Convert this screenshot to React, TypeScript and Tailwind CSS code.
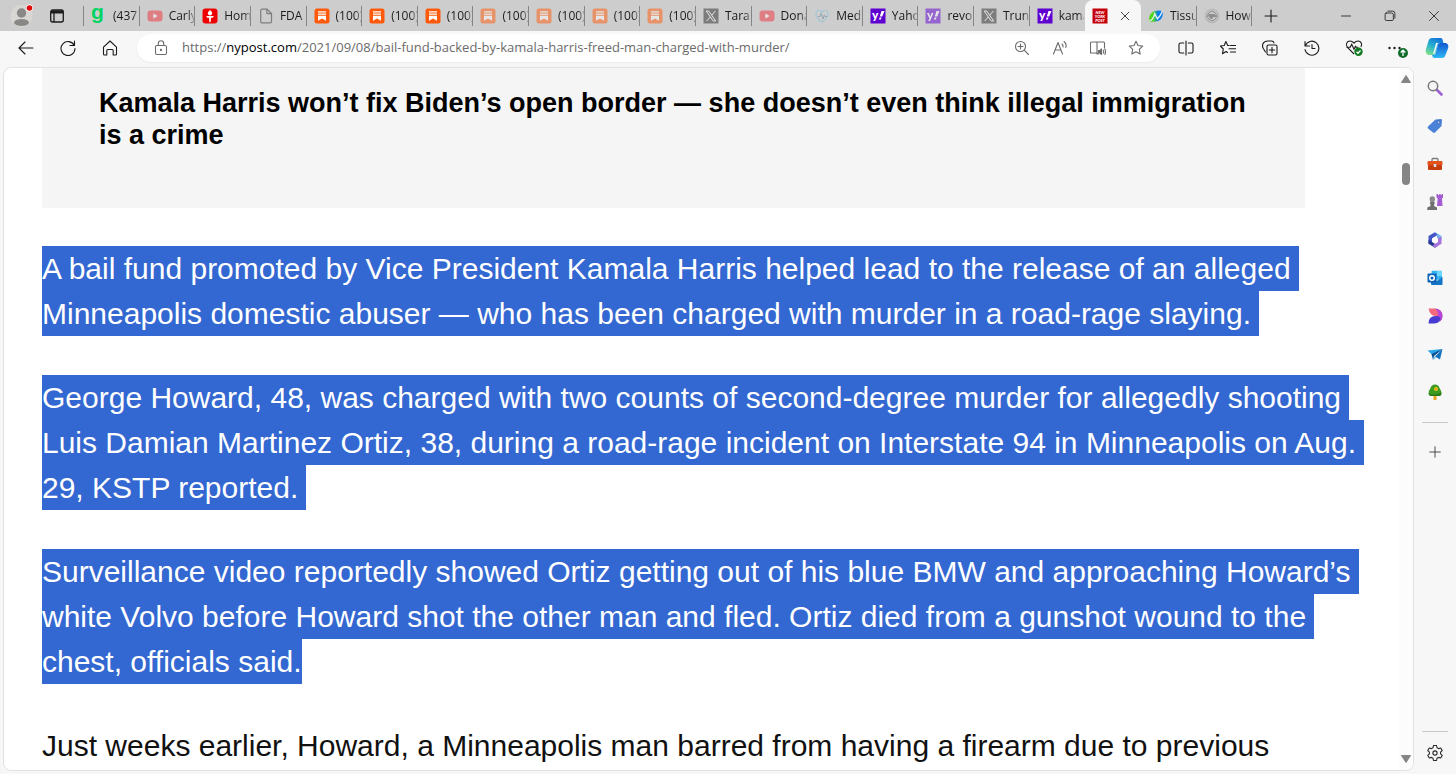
import React from 'react';
import clsx from 'clsx';

type TabIcon = 'g' | 'youtube' | 'torch' | 'page' | 'substack' | 'x' | 'heart' | 'yahoo' | 'post' | 'swirl' | 'seal';

interface Tab {
  title: string;
  icon: TabIcon;
  faded?: boolean;
  active?: boolean;
}

const tabs: Tab[] = [
  { title: '(437', icon: 'g' },
  { title: 'Carly', icon: 'youtube', faded: true },
  { title: 'Hom', icon: 'torch' },
  { title: 'FDA', icon: 'page' },
  { title: '(100)', icon: 'substack' },
  { title: '(100)', icon: 'substack' },
  { title: '(100)', icon: 'substack' },
  { title: '(100)', icon: 'substack', faded: true },
  { title: '(100)', icon: 'substack', faded: true },
  { title: '(100)', icon: 'substack', faded: true },
  { title: '(100)', icon: 'substack', faded: true },
  { title: 'TaraE', icon: 'x', faded: true },
  { title: 'Dona', icon: 'youtube', faded: true },
  { title: 'Med', icon: 'heart', faded: true },
  { title: 'Yaho', icon: 'yahoo' },
  { title: 'revo', icon: 'yahoo', faded: true },
  { title: 'Trun', icon: 'x', faded: true },
  { title: 'kama', icon: 'yahoo' },
  { title: 'Bail fund backed by Kamala Harris', icon: 'post', active: true },
  { title: 'Tissu', icon: 'swirl' },
  { title: 'How', icon: 'seal', faded: true },
];

const Favicon = ({ icon }: { icon: TabIcon }) => {
  switch (icon) {
    case 'g':
      return (
        <svg className="w-4 h-4" viewBox="0 0 16 16">
          <text x="0" y="11" fontSize="21" fontWeight="bold" fontFamily="Liberation Sans, sans-serif" fill="#00d563">g</text>
        </svg>
      );
    case 'youtube':
      return (
        <svg className="w-4 h-4" viewBox="0 0 16 16">
          <rect x="0.5" y="2.5" width="15" height="11" rx="3" fill="#f0323a" />
          <path d="M6.3 5.5v5L10.7 8z" fill="#fff" />
        </svg>
      );
    case 'torch':
      return (
        <svg className="w-4 h-4" viewBox="0 0 16 16">
          <rect x="0.5" y="0.5" width="15" height="15" rx="3" fill="#ee0000" />
          <path d="M8 1.8c.3 1.2 2.200 1.700 2.200 3.500C10.200 6.600 9 7.400 8 7.400s-2.200-.8-2.200-2.100C5.800 3.800 7.600 3.300 8 1.800z" fill="#fff" />
          <path d="M4.200 8h7.600l-1 1.800H9l-.4 4.400H7.400L7 9.800H5.200z" fill="#fff" />
        </svg>
      );
    case 'page':
      return (
        <svg className="w-4 h-4" viewBox="0 0 16 16" fill="none" stroke="#7d7d7d" strokeWidth="1.2">
          <path d="M4 1.2h5L13.5 5.5v8a1.300 1.300 0 0 1-1.300 1.300H4a1.300 1.300 0 0 1-1.300-1.300v-11A1.300 1.300 0 0 1 4 1.200z" />
          <path d="M8.8 1.4v3.300c0 .7.4 1 1 1h3.400" />
        </svg>
      );
    case 'substack':
      return (
        <svg className="w-4 h-4" viewBox="0 0 16 16">
          <rect x="0.5" y="0.5" width="15" height="15" rx="2.5" fill="#ff5a0a" />
          <path d="M4 3.2h8v1.300H4zM4 5.500h8v1.300H4zM4 7.800h8v5L8 10.600 4 12.800z" fill="#fff" />
        </svg>
      );
    case 'x':
      return (
        <svg className="w-4 h-4" viewBox="0 0 16 16">
          <rect x="0.5" y="0.5" width="15" height="15" fill="#2e2e2e" />
          <path d="M3.200 3h2.500l7 10h-2.500zM12.300 3 8.800 7.200M7.200 9 3.700 13" fill="none" stroke="#fff" />
        </svg>
      );
    case 'heart':
      return (
        <svg className="w-4 h-4" viewBox="0 0 16 16" fill="none">
          <path d="M8 14C4 11.500 2 9 2 6.200 2 3.800 3.500 2.500 5 2.500c1.500 0 2.500.8 3 2 .5-1.200 1.500-2 3-2 1.600 0 3 1.300 3 3.500C14 9 12 11.500 8 14z" stroke="#79bede" strokeWidth="1.2" />
          <path d="M4 8.500h2l1-3 2 5.500 1.200-4 .8 1.500h2" stroke="#5d7f92" />
        </svg>
      );
    case 'yahoo':
      return (
        <svg className="w-4 h-4" viewBox="0 0 16 16">
          <rect x="0.5" y="0.5" width="15" height="15" fill="#5f01d1" />
          <text x="2" y="11" fontSize="12" fontWeight="900" fontFamily="Lato, sans-serif" fill="#fff">y</text>
          <path d="M11.500 3H14.500l-2.300 5.500H9.800zM9.500 9.500h2l-.6 2H9z" fill="#fff" />
        </svg>
      );
    case 'post':
      return (
        <svg className="w-4 h-4" viewBox="0 0 16 16">
          <rect x="0.5" y="0.5" width="15" height="15" fill="#c6000b" />
          <g fontSize="4" fontWeight="900" fontStyle="italic" fontFamily="Lato, sans-serif" fill="#fff" textAnchor="middle">
            <text x="8" y="5.500">NEW</text>
            <text x="8" y="9.500">YORK</text>
            <text x="8" y="13.500">POST</text>
          </g>
        </svg>
      );
    case 'swirl':
      return (
        <svg className="w-4 h-4" viewBox="0 0 16 16">
          <defs>
            <linearGradient id="swirl" x1="0" y1="0" x2="1" y2="0">
              <stop offset="0.3" stopColor="#4fd818" />
              <stop offset="0.65" stopColor="#0b7cf0" />
            </linearGradient>
          </defs>
          <path d="M1.200 10.500C1.200 6 5.500 2.500 10 2.500L14.500 3c1.300 5-1.500 10.500-7 10.500-2 0-4 .3-6 .7z" fill="url(#swirl)" />
          <path d="M1.500 13.500C4.500 11.500 6 9 6.700 5.800l2.800 5C11.500 9 13 6.500 14.500 3" fill="none" stroke="#e4ecf4" strokeWidth="1.400" />
        </svg>
      );
    case 'seal':
      return (
        <svg className="w-4 h-4" viewBox="0 0 16 16" fill="none" stroke="#4e4e4e">
          <circle cx="8" cy="8" r="7" fill="#8f8f8f" stroke="none" opacity="0.4" />
          <circle cx="8" cy="8" r="6.800" strokeDasharray="1 1" strokeWidth="0.600" />
          <circle cx="8" cy="8" r="4.500" fill="#c9c9c9" />
          <path d="M4.500 6.500h6l1.500 2H9L7.500 11 5.500 9z" fill="#4e4e4e" />
        </svg>
      );
  }
};

const IconButton = ({ label, className, children }: { label: string; className: string; children: React.ReactNode }) => (
  <button aria-label={label} title={label} className={clsx('flex shrink-0 items-center justify-center', className)}>
    {children}
  </button>
);

// Thin outline icon on a 16px grid
const Outline = ({ d, className = 'w-4 h-4', children }: { d: string; className?: string; children?: React.ReactNode }) => (
  <svg className={className} viewBox="0 0 16 16" fill="none" stroke="currentColor" strokeWidth="1.1" strokeLinecap="round" strokeLinejoin="round">
    <path d={d} />
    {children}
  </svg>
);

const TabStrip = () => (
  <header className="flex h-[31px] shrink-0 bg-[#cdcdcd] text-[#1b1b1b]">
    <div className="flex w-[84px] shrink-0 items-center">
      <button aria-label="Profile" className="ml-[10px]">
        <svg className="w-6 h-6" viewBox="0 0 24 24">
          <circle cx="11.500" cy="12" r="11" fill="#d9d7d3" />
          <circle cx="11.500" cy="9" r="4.700" fill="#8a8886" />
          <ellipse cx="11.500" cy="18.500" rx="7.500" ry="3.500" fill="#8a8886" />
          <circle cx="19.500" cy="4" r="3.500" fill="#fff" />
          <circle cx="19.500" cy="4" r="2.800" fill="#e00b0b" />
        </svg>
      </button>
      <button aria-label="Tab actions menu" className="ml-[15px]">
        <svg className="w-4 h-4" viewBox="0 0 16 16" fill="none" stroke="#1b1b1b" strokeWidth="1.300">
          <rect x="1.700" y="2" width="12.600" height="12" rx="2" />
          <path d="M2 4h12" strokeWidth="3" />
          <path d="M5 5v9" />
        </svg>
      </button>
      <span className="ml-auto h-5 w-px bg-[#858585]" />
    </div>
    <nav aria-label="Tabs" className="flex min-w-0 flex-1">
      {tabs.map((tab, i) => {
        if (tab.active) {
          return (
            <div key={i} className="flex min-w-0 flex-1 items-center rounded-t-lg bg-[#f7f7f7] pl-[7px]">
              <button aria-label={tab.title}>
                <Favicon icon={tab.icon} />
              </button>
              <IconButton label="Close tab" className="mx-auto w-5">
                <Outline className="w-3 h-3" d="M3 3l10 10M13 3L3 13" />
              </IconButton>
            </div>
          );
        }
        const hasDivider = !tabs[i + 1]?.active;
        return (
          <button key={i} className="flex min-w-0 flex-1 items-center pl-[7px]">
            <span className={clsx('shrink-0', tab.faded && 'opacity-50')}>
              <Favicon icon={tab.icon} />
            </span>
            <span className="ml-[6px] min-w-0 flex-1 overflow-hidden text-left font-['Open_Sans',sans-serif] text-xs whitespace-nowrap mask-r-from-75% mask-r-to-110%">
              {tab.title}
            </span>
            <span className={clsx('h-5 w-px shrink-0', hasDivider && 'bg-[#858585]')} />
          </button>
        );
      })}
    </nav>
    <IconButton label="New tab" className="w-[38px]">
      <Outline className="w-4 h-4" d="M8 2v12M2 8h12" />
    </IconButton>
    <div className="ml-[34px] flex">
      <IconButton label="Minimize" className="w-11">
        <Outline className="w-3 h-3" d="M2 8h12" />
      </IconButton>
      <IconButton label="Restore" className="w-11">
        <Outline className="w-3 h-3" d="M3 4h7a2.500 2.500 0 0 1 2.500 2.500v6A1.500 1.500 0 0 1 11 14H3a1.500 1.500 0 0 1-1.500-1.500v-7A1.500 1.500 0 0 1 3 4zM5 1.500h6.500a3 3 0 0 1 3 3V11" />
      </IconButton>
      <IconButton label="Close" className="w-11">
        <Outline className="w-3 h-3" d="M2 2l12 12M14 2L2 14" />
      </IconButton>
    </div>
  </header>
);

const STAR = 'M8 1.200l2 4.300 4.700.6-3.400 3.300.9 4.700L8 11.800l-4.200 2.300.9-4.700L1.300 6.100 6 5.500z';

const Toolbar = () => (
  <div className="flex h-9 shrink-0 items-center pb-[2px] pl-[5px] text-[#1b1b1b]">
    <IconButton label="Back" className="w-[42px]">
      <Outline d="M15 8H1M7 2L1 8l6 6" />
    </IconButton>
    <IconButton label="Refresh" className="w-[42px]">
      <Outline d="M14.500 1v4.500H10M14.300 5.500A7 7 0 1 0 15 8.500" />
    </IconButton>
    <IconButton label="Home" className="w-[42px]">
      <Outline d="M1.500 7.200L8 1l6.500 6.200v6.800a1 1 0 0 1-1 1h-2.300V10.500a1 1 0 0 0-1-1H5.800a1 1 0 0 0-1 1V15H2.500a1 1 0 0 1-1-1z" />
    </IconButton>
    <div className="ml-[6px] flex h-7 min-w-0 flex-1 items-center rounded-full bg-white pr-[5px] pl-[14px] text-[#6b6b6b] shadow-xs">
      <IconButton label="Site information" className="w-5">
        <Outline d="M4 5.500h8A1.500 1.500 0 0 1 13.500 7v6a1.500 1.500 0 0 1-1.500 1.500H4A1.500 1.500 0 0 1 2.500 13V7A1.500 1.500 0 0 1 4 5.500zM5.300 5.500V3.500a2.700 2.700 0 0 1 5.400 0v2">
          <circle cx="8" cy="10" r="0.600" fill="currentColor" />
        </Outline>
      </IconButton>
      <a href="#article" className="ml-[11px] min-w-0 flex-1 truncate font-['Open_Sans',sans-serif] text-[13px]">
        https://<span className="text-black">nypost.com</span>/2021/09/08/bail-fund-backed-by-kamala-harris-freed-man-charged-with-murder/
      </a>
      <IconButton label="Zoom" className="w-[38px]">
        <Outline d="M11.500 6.500a5 5 0 1 1-10 0 5 5 0 0 1 10 0zM10.200 10.200l4.300 4.300M6.500 4v5M4 6.500h5" />
      </IconButton>
      <IconButton label="Read aloud" className="w-[38px]">
        <Outline d="M1.500 14L6 2.500 10.500 14M3 10h6M10 4q1.500 1.300 1 3M12 1.500q3 2.500 1.800 6" />
      </IconButton>
      <IconButton label="Immersive reader" className="w-[38px]">
        <Outline d="M7 14V2H1.500A1 1 0 0 0 .5 3v10h6.500l1.500 1M7 2h6.500a1 1 0 0 1 1 1v5">
          <path d="M8.500 10.500H10L11.500 9v5.500L10 13H8.500z" fill="currentColor" />
          <path d="M13.300 10.200q.8 1.500 0 3M14.800 9q1.600 2.700 0 5.400" />
        </Outline>
      </IconButton>
      <IconButton label="Favorite this page" className="w-[38px]">
        <Outline d={STAR} />
      </IconButton>
    </div>
    <div className="ml-[5px] flex">
      <IconButton label="Split screen" className="w-[42px]">
        <Outline d="M8 1v14M5.800 3H2.500A1.500 1.500 0 0 0 1 4.500v7A1.500 1.500 0 0 0 2.500 13h3.300M10.200 3h3.300A1.500 1.500 0 0 1 15 4.500v7a1.500 1.500 0 0 1-1.500 1.500h-3.300" />
      </IconButton>
      <IconButton label="Favorites" className="w-[42px]">
        <Outline d="M9.200 5.500H7.700L5.900 1.500 4.200 5.500.3 6l3 3-.8 4.700 3.500-2.200 1.500 1M10.500 5.500H16M9 8.800H16M10.500 12H16" />
      </IconButton>
      <IconButton label="Collections" className="w-[42px]">
        <Outline d="M6.500 5h7A1.500 1.500 0 0 1 15 6.500v7a1.500 1.500 0 0 1-1.500 1.500h-7A1.500 1.500 0 0 1 5 13.500v-7A1.500 1.500 0 0 1 6.500 5zM10 7.300v5.400M7.300 10h5.400M3.500 12L1.300 8.500C.2 6.500.2 4.500 1.700 2.700 2.700 1.500 4 1 5.500 1h4A2.500 2.500 0 0 1 12 3" />
      </IconButton>
      <IconButton label="History" className="w-[42px]">
        <Outline d="M1 1.500V6h4.500M1.300 5.800A7 7 0 1 1 1 9.500M8 4.500v4h3" />
      </IconButton>
      <IconButton label="Browser essentials" className="w-[42px]">
        <svg className="w-[18px] h-[18px]" viewBox="0 0 18 18" fill="none" stroke="currentColor" strokeWidth="1.100">
          <path d="M9 15L2.500 8.500C0 5.500 2 2 5 2c2 0 3 1 4 2.200C10 3 11 2 13 2c3 0 4.800 3.500 2.800 6" />
          <path d="M1.500 8.300h3.700l1.500-3 2.300 5 1.500-3 .8 1h2" />
          <circle cx="13.500" cy="12.800" r="4.200" fill="#0f7b20" stroke="none" />
          <path d="M11.500 12.800l1.500 1.500 2.500-2.800" stroke="#fff" strokeWidth="1.300" />
        </svg>
      </IconButton>
      <IconButton label="Settings and more" className="w-[42px]">
        <svg className="w-6 h-6" viewBox="0 0 24 24" fill="currentColor">
          <circle cx="5.500" cy="12" r="1.200" />
          <circle cx="10.500" cy="12" r="1.200" />
          <circle cx="15.500" cy="12" r="1.200" />
          <circle cx="19" cy="17" r="5" fill="#0f6b2b" />
          <path d="M19 20v-5.500M16.700 16.500l2.300-2.300 2.300 2.300" fill="none" stroke="#fff" strokeWidth="1.300" />
        </svg>
      </IconButton>
      <IconButton label="Copilot" className="w-[39px]">
        <svg className="w-6 h-6" viewBox="0 0 24 24">
          <defs>
            <linearGradient id="cp-left" x1="0.700" y1="0" x2="0.200" y2="1">
              <stop offset="0" stopColor="#1273d8" />
              <stop offset="0.500" stopColor="#25b0d0" />
              <stop offset="1" stopColor="#7fe08a" />
            </linearGradient>
            <linearGradient id="cp-right" x1="0" y1="0" x2="0" y2="1">
              <stop offset="0" stopColor="#1257d0" />
              <stop offset="1" stopColor="#2fb8f5" />
            </linearGradient>
          </defs>
          <path d="M7 2h8.500c1 0 1.500.5 2 1.500l1 3.500h-3c-1.500 0-2.200 1-2.600 2.200L10.500 17c-.5 1.500-1.300 2-2.600 2H4.500C1.500 19 0 16.500 1 13L3.500 5C4.200 3 5 2 7 2z" fill="url(#cp-left)" />
          <path d="M17 22H9.500C8 22 7.500 21 7 19h1.300c1.300 0 2-.7 2.400-2l2.200-7.800C13.400 7.700 14 7 15.500 7h4c3.500 0 4.500 2.500 3.500 5.500L20.500 19c-.7 2-1.500 3-3.500 3z" fill="url(#cp-right)" />
          <path d="M11 7h2.500q-1 .8-1.300 2l-2.400 8q-.4 1-1.300 1H8z" fill="#eef8fd" />
        </svg>
      </IconButton>
    </div>
  </div>
);

const sidebarApps: { label: string; art: React.ReactNode }[] = [
  {
    label: 'Search',
    art: (
      <>
        <path d="M9.500 9.500l5 5" stroke="#9b5fd0" strokeWidth="2.600" strokeLinecap="round" />
        <circle cx="6" cy="6" r="4.700" fill="#f4f4f4" stroke="#777" strokeWidth="1.500" />
      </>
    ),
  },
  {
    label: 'Shopping',
    art: (
      <>
        <path d="M8.500 1.500L14 1q1 0 1 1l-.5 6-6.500 6.500q-1 .8-2 0L1 10.500q-.8-1 0-2z" fill="#4a82d8" />
        <circle cx="11.700" cy="4.200" r="1.200" fill="#dce8fa" stroke="#234f9c" strokeWidth="0.700" />
      </>
    ),
  },
  {
    label: 'Tools',
    art: (
      <>
        <path d="M5 5V3.500Q5 2.500 6 2.500h4q1 0 1 1V5" fill="none" stroke="#7b7b7b" strokeWidth="1.300" />
        <rect x="0.500" y="5" width="15" height="4.500" rx="1" fill="#e2521c" />
        <rect x="1" y="9" width="14" height="5" rx="1" fill="#c63c0c" />
        <rect x="6.700" y="8" width="2.600" height="3" rx="0.500" fill="#d8e2e8" />
      </>
    ),
  },
  {
    label: 'Games',
    art: (
      <>
        <path d="M9.500 0H11v1h1.200V0h1.500v1h1V0H16v3.500l-1 1 .5 7.500H10l.7-7.500-1.200-1z" fill="#a45cd2" />
        <circle cx="5.300" cy="5" r="2.700" fill="#8a8a8a" />
        <path d="M3 7.500h4.600v1L7 12l3 1.500V16H.3v-2.500L3.600 12 3 8.500z" fill="#707070" />
      </>
    ),
  },
  {
    label: 'Microsoft 365',
    art: (
      <>
        <path d="M8 .3L14.500 4v4.500L10 6V3.500z" fill="#6fb1ee" />
        <path d="M8 .3L1.500 4v7.500L5 12V6.500L10.500 3z" fill="#4456c7" />
        <path d="M1.500 8v3.700L8 15.700l3-2L5 10z" fill="#24368f" />
        <path d="M14.500 5v6.700L8 15.700 5.500 13.500 11 10V6z" fill="#a873dd" />
        <circle cx="8" cy="8" r="2.700" fill="#fff" />
      </>
    ),
  },
  {
    label: 'Outlook',
    art: (
      <>
        <rect x="4.500" y="0.800" width="10.500" height="9" rx="1" fill="#34b1ef" />
        <path d="M10 1h5v5h-5z" fill="#6bd5fb" />
        <path d="M4 7l6 4 5.500-4v7q0 1-1 1H5q-1 0-1-1z" fill="#1474c6" />
        <rect x="0.500" y="3.500" width="9" height="9" rx="1" fill="#0b62b6" />
        <circle cx="5" cy="8" r="2.300" fill="none" stroke="#fff" strokeWidth="1.500" />
      </>
    ),
  },
  {
    label: 'Designer',
    art: (
      <>
        <path d="M1.500.5H8q7.500.8 7.500 7.500 0 3.500-2.500 5.500L8.500 8Q3 8 1.500.5z" fill="#f2687c" />
        <path d="M8 .5q7.500.8 7.500 7.500 0 3.500-2.500 5.500L9.500 8.300Q14 6 8 .5z" fill="#b645dd" />
        <path d="M1.500 15.500Q1.500 8 8.500 8q5 .3 5 3-1 4-6 4.500z" fill="#483bcf" />
      </>
    ),
  },
  {
    label: 'Drop',
    art: (
      <>
        <path d="M.5 4.500L15.500 3 6.500 10z" fill="#2ba4e8" />
        <path d="M15.500 3L13 13.500 8 10.500z" fill="#1672be" />
        <path d="M4.500 8L15.500 3 7 10l-1 4z" fill="#0f5192" />
        <path d="M7.500 10.500L9 11.500 6 14z" fill="#58c0f2" />
      </>
    ),
  },
  {
    label: 'Games tree',
    art: (
      <>
        <rect x="6.500" y="11" width="3" height="5" rx="0.500" fill="#e8a31f" />
        <path d="M8 .5q3.500 0 4.500 3.500 2.500 3.500 2 6-.5 2-3 2h-7q-2.500 0-3-2-.5-2.500 2-6Q4.500.5 8 .5z" fill="#3d9b22" />
        <path d="M4 12q-2-.3-2.300-2.500 6 2.500 12.700-1Q14.500 12 12 12z" fill="#2b7c18" />
        <circle cx="9" cy="5" r="2" fill="#f3c522" />
        <circle cx="9" cy="5" r="0.800" fill="#d77910" />
      </>
    ),
  },
];

const Sidebar = () => (
  <aside className="flex w-[42px] shrink-0 flex-col items-center pt-[2px] text-[#2b2b2b]">
    {sidebarApps.map(app => (
      <IconButton key={app.label} label={app.label} className="h-[38px] w-full">
        <svg className="w-4 h-4" viewBox="0 0 16 16">{app.art}</svg>
      </IconButton>
    ))}
    <hr className="mt-[11px] w-[26px] border-[#c8c8c8]" />
    <IconButton label="Customize" className="mt-[10px] h-[38px] w-full">
      <Outline className="w-3 h-3" d="M8 1v14M1 8h14" />
    </IconButton>
    <hr className="mt-auto w-[26px] border-[#c8c8c8]" />
    <IconButton label="Settings" className="h-[42px] w-full">
      <Outline d="M6.500.5h3l.5 2.200 1.500.9 2.200-.6 1.500 2.600-1.600 1.600v1.600l1.600 1.600-1.500 2.600-2.200-.6-1.500.9-.5 2.200h-3L6 13.300l-1.500-.9-2.200.6L.8 10.400l1.600-1.600V7.200L.8 5.600 2.300 3l2.200.6L6 2.700z">
        <circle cx="8" cy="8" r="2.100" />
      </Outline>
    </IconButton>
  </aside>
);

// Selected text keeps a full-height band behind every wrapped line
const Selected = ({ last, children }: { last?: boolean; children: React.ReactNode }) => (
  <mark className={clsx('bg-[#3367d1] box-decoration-clone py-[6px] text-white', !last && 'pr-2')}>{children}</mark>
);

const Article = () => (
  <article id="article" className="min-w-0 flex-1 overflow-hidden pr-8 pl-[38px] font-['Liberation_Sans',Arial,sans-serif]">
    <div className="mr-[62px] bg-[#f5f5f5] pt-[19px] pr-12 pb-[57px] pl-[57px]">
      <h3 className="text-[27px] leading-8 font-bold text-black">
        Kamala Harris won’t fix Biden’s open border — she doesn’t even think illegal immigration is a crime
      </h3>
    </div>
    <div className="mt-[38px] flex flex-col gap-[39px] text-[30px] leading-[45px] text-[#111]">
      <p>
        <Selected>
          A bail fund promoted by Vice President Kamala Harris helped lead to the release of an alleged Minneapolis
          domestic abuser — who has been charged with murder in a road-rage slaying.
        </Selected>
      </p>
      <p>
        <Selected>
          George Howard, 48, was charged with two counts of second-degree murder for allegedly shooting Luis Damian
          Martinez Ortiz, 38, during a road-rage incident on Interstate 94 in Minneapolis on Aug. 29, KSTP reported.
        </Selected>
      </p>
      <p>
        <Selected>
          Surveillance video reportedly showed Ortiz getting out of his blue BMW and approaching Howard’s white Volvo
          before Howard shot the other man and fled. Ortiz died from a gunshot wound to the
        </Selected>{' '}
        <Selected last>chest, officials said.</Selected>
      </p>
      <p>Just weeks earlier, Howard, a Minneapolis man barred from having a firearm due to previous</p>
    </div>
  </article>
);

const Scrollbar = () => (
  <div className="flex w-[14px] shrink-0 flex-col items-center bg-[#fcfcfc] py-[7px] text-[#858585]">
    <svg className="h-2 w-[10px]" viewBox="0 0 10 8" fill="currentColor">
      <path d="M5 .5L9.500 7.500H.5z" stroke="currentColor" strokeLinejoin="round" />
    </svg>
    <div className="mt-20 h-[22px] w-2 rounded-full bg-[#858585]" />
    <svg className="mt-auto h-2 w-[10px]" viewBox="0 0 10 8" fill="currentColor">
      <path d="M5 7.500L.5.500h9z" stroke="currentColor" strokeLinejoin="round" />
    </svg>
  </div>
);

export default function App() {
  return (
    <div className="flex h-screen flex-col overflow-hidden bg-[#f7f7f7]">
      <TabStrip />
      <Toolbar />
      <div className="flex min-h-0 flex-1">
        <main className="mb-[3px] ml-[3px] flex min-w-0 flex-1 overflow-hidden rounded-lg border border-[#e2e2e2] bg-white">
          <Article />
          <Scrollbar />
        </main>
        <Sidebar />
      </div>
    </div>
  );
}
